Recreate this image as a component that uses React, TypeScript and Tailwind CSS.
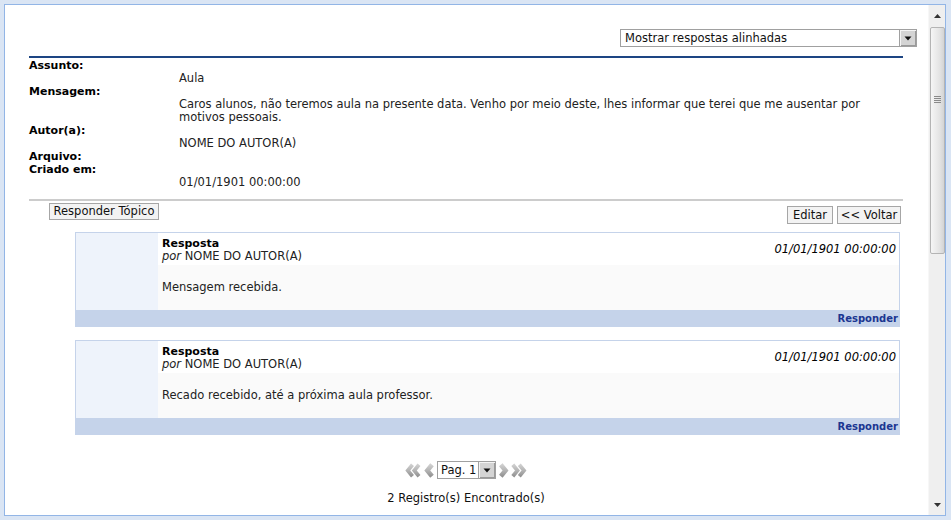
import React from "react";

function Chevron({ dir, double }: { dir: "l" | "r"; double?: boolean }) {
  const w = double ? 17 : 12;
  const pts = (x: number) =>
    dir === "l"
      ? `${x + 6.5},1.8 ${x + 1.8},7.5 ${x + 6.5},13.2`
      : `${x + 1.8},1.8 ${x + 6.5},7.5 ${x + 1.8},13.2`;
  const id = `g${dir}${double ? 1 : 0}`;
  return (
    <svg width={w} height={15} viewBox={`0 0 ${w} 15`}>
      <defs>
        <linearGradient id={id} x1="0" y1="0" x2="0" y2="1">
          <stop offset="0" stopColor="#cfcfcf" />
          <stop offset="0.5" stopColor="#b4b4b4" />
          <stop offset="1" stopColor="#939393" />
        </linearGradient>
      </defs>
      {double ? (
        <>
          <polyline points={pts(1)} fill="none" stroke={`url(#${id})`} strokeWidth={3.8} />
          <polyline points={pts(7.5)} fill="none" stroke={`url(#${id})`} strokeWidth={3.8} />
        </>
      ) : (
        <polyline points={pts(dir === "l" ? 2.5 : 2)} fill="none" stroke={`url(#${id})`} strokeWidth={4.6} />
      )}
    </svg>
  );
}

function DropBtn() {
  return (
    <div className="w-[17px] h-full bg-[#d4d4d4] border-l border-[#a0a0a0] flex items-center justify-center shadow-[inset_1px_1px_0_#f4f4f4,inset_-1px_-1px_0_#9a9a9a]">
      <svg width="8" height="5" viewBox="0 0 8 5">
        <polygon points="0.5,0.5 7.5,0.5 4,4.5" fill="#111" />
      </svg>
    </div>
  );
}

function Reply({ text }: { text: string }) {
  return (
    <div className="w-[825px] ml-[46px]">
      <div className="flex border-t border-l border-r border-[#c5d3ea]">
        <div className="w-[82px] bg-[#eef3fb]" />
        <div className="flex-1 flex flex-col">
          <div className="h-[32px] bg-white flex items-center justify-between pl-[4px] pr-[3px]">
            <div className="flex flex-col pt-[1px]">
              <span className="font-bold text-black text-[11px]">Resposta</span>
              <span>
                <i>por</i> NOME DO AUTOR(A)
              </span>
            </div>
            <span className="italic text-black">01/01/1901 00:00:00</span>
          </div>
          <div className="h-[45px] bg-[#fafafa] flex items-center pl-[4px]">{text}</div>
        </div>
      </div>
      <div className="h-[17px] bg-[#c5d3ea] flex items-center justify-end pr-[2px] font-bold text-[10px] text-[#1b3691]">
        Responder
      </div>
    </div>
  );
}

function Scrollbar() {
  return (
    <div className="w-[17px] h-full bg-[#efefef] border-l border-[#f7f7f7] flex flex-col items-center">
      <div className="h-[21px] w-full flex items-center justify-center">
        <svg width="7" height="4" viewBox="0 0 7 4">
          <polygon points="0,4 7,4 3.5,0" fill="#333" />
        </svg>
      </div>
      <div className="w-[15px] h-[227px] mt-[1px] rounded-[2px] border border-[#b4b4b4] bg-[linear-gradient(to_right,#f6f6f6,#e2e2e2_70%,#d4d4d4)] flex flex-col items-center pt-[68px]">
        <div className="flex flex-col gap-[1px]">
          <div className="w-[7px] h-[1px] bg-[#8a8a8a]" />
          <div className="w-[7px] h-[1px] bg-[#8a8a8a]" />
          <div className="w-[7px] h-[1px] bg-[#8a8a8a]" />
          <div className="w-[7px] h-[1px] bg-[#8a8a8a]" />
        </div>
      </div>
      <div className="flex-1" />
      <div className="h-[20px] w-full flex items-center justify-center">
        <svg width="7" height="4" viewBox="0 0 7 4">
          <polygon points="0,0 7,0 3.5,4" fill="#333" />
        </svg>
      </div>
    </div>
  );
}

export default function App() {
  return (
    <div className="w-[951px] h-[520px] bg-[#dae5f4] pt-[4px] pl-[4px] font-['DejaVu_Sans',sans-serif] text-[11.5px] leading-[13px] text-[#222]">
      <div className="w-[942px] h-[512px] border border-[#92b5e6] bg-white flex overflow-hidden">
        <div className="flex-1 pl-[24px] pr-[11px] flex flex-col">
          <div className="flex justify-end mt-[24px]">
            <div className="w-[297px] h-[18px] border border-[#a0a0a0] bg-white flex">
              <div className="flex-1 pl-[4px] leading-[16px] text-[#111]">Mostrar respostas alinhadas</div>
              <DropBtn />
            </div>
          </div>
          <div className="h-[2px] bg-[#1d4583] mt-[9px] mr-[14px]" />
          <div className="flex flex-col mt-[1px] mr-[14px]">
            <div className="font-bold text-black text-[11px]">Assunto:</div>
            <div className="ml-[150px]">Aula</div>
            <div className="font-bold text-black text-[11px]">Mensagem:</div>
            <div className="ml-[150px] whitespace-nowrap">
              Caros alunos, não teremos aula na presente data. Venho por meio deste, lhes informar que terei que me ausentar por
              <br />
              motivos pessoais.
            </div>
            <div className="font-bold text-black text-[11px]">Autor(a):</div>
            <div className="ml-[150px]">NOME DO AUTOR(A)</div>
            <div className="font-bold text-black text-[11px]">Arquivo:</div>
            <div className="font-bold text-black text-[11px]">Criado em:</div>
            <div className="ml-[150px]">01/01/1901 00:00:00</div>
          </div>
          <div className="h-[2px] bg-[#cccccc] mt-[10px] mr-[14px]" />
          <div className="flex items-start justify-between mt-[2px] mr-[16px]">
            <button className="ml-[20px] w-[110px] h-[17px] border border-[#a6a6a6] bg-[#f3f3f3] text-[#111] leading-[15px] whitespace-nowrap">
              Responder Tópico
            </button>
            <div className="flex gap-[4px] mt-[3px]">
              <button className="w-[46px] h-[18px] border border-[#a6a6a6] bg-[#f3f3f3] text-[#111] leading-[16px]">
                Editar
              </button>
              <button className="w-[64px] h-[18px] border border-[#a6a6a6] bg-[#f3f3f3] text-[#111] leading-[16px] whitespace-nowrap">
                &lt;&lt; Voltar
              </button>
            </div>
          </div>
          <div className="mt-[8px]">
            <Reply text="Mensagem recebida." />
          </div>
          <div className="mt-[13px]">
            <Reply text="Recado recebido, até a próxima aula professor." />
          </div>
          <div className="flex justify-center items-center mt-[26px] gap-[1px] mr-[14px]">
            <Chevron dir="l" double />
            <Chevron dir="l" />
            <div className="ml-[1px] w-[59px] h-[18px] border border-[#a0a0a0] bg-white flex">
              <div className="flex-1 pl-[3px] leading-[16px] text-[#111]">Pag. 1</div>
              <DropBtn />
            </div>
            <Chevron dir="r" />
            <Chevron dir="r" double />
          </div>
          <div className="text-center mt-[13px] mr-[14px] text-[#111]">2 Registro(s) Encontrado(s)</div>
        </div>
        <Scrollbar />
      </div>
    </div>
  );
}
